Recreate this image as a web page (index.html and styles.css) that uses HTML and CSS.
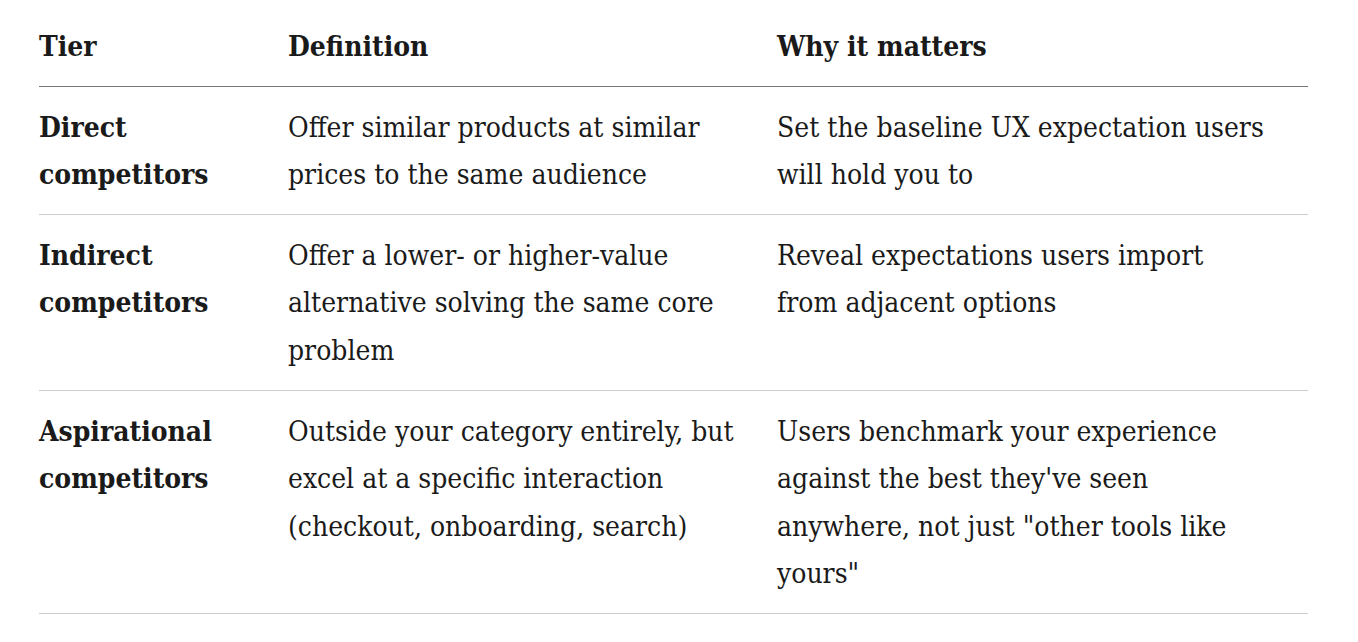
FILE: index.html
```html
<!DOCTYPE html>
<html lang="en">
<head>
<meta charset="utf-8">
<title>Competitor tiers</title>
<link rel="stylesheet" href="styles.css">
</head>
<body>
<main class="page">
  <table class="tiers">
    <colgroup>
      <col class="col-tier">
      <col class="col-def">
      <col class="col-why">
    </colgroup>
    <thead>
      <tr>
        <th>Tier</th>
        <th>Definition</th>
        <th>Why it matters</th>
      </tr>
    </thead>
    <tbody>
      <tr>
        <td class="tier">Direct competitors</td>
        <td>Offer similar products at similar prices to the same audience</td>
        <td>Set the baseline UX expectation users will hold you to</td>
      </tr>
      <tr>
        <td class="tier">Indirect competitors</td>
        <td>Offer a lower- or higher-value alternative solving the same core problem</td>
        <td>Reveal expectations users import from adjacent options</td>
      </tr>
      <tr>
        <td class="tier">Aspirational competitors</td>
        <td>Outside your category entirely, but excel at a specific interaction (checkout, onboarding, search)</td>
        <td>Users benchmark your experience against the best they've seen anywhere, not just "other tools like yours"</td>
      </tr>
    </tbody>
  </table>
</main>
</body>
</html>
```
FILE: styles.css
```css
html, body {
  margin: 0;
  padding: 0;
  background: #ffffff;
}

.page {
  padding: 6px 50px 0 39px;
  font-family: "DejaVu Serif Condensed", "DejaVu Serif", serif;
  font-stretch: condensed;
  color: #1a1a1a;
}

.tiers {
  width: 1269px;
  border-collapse: collapse;
  table-layout: fixed;
  font-size: 28px;
  line-height: 47.6px;
}

.col-tier { width: 249px; }
.col-def { width: 489px; }
.col-why { width: 531px; }

.tiers th,
.tiers td {
  text-align: left;
  vertical-align: top;
  padding: 17px 36px 15px 0;
}

.tiers th:last-child,
.tiers td:last-child {
  padding-right: 41px;
}

.tiers th {
  font-weight: 700;
  border-bottom: 1px solid #777777;
}

.tiers td {
  font-weight: 400;
  border-bottom: 1px solid #cccccc;
}

.tiers td.tier {
  font-weight: 700;
}
```
